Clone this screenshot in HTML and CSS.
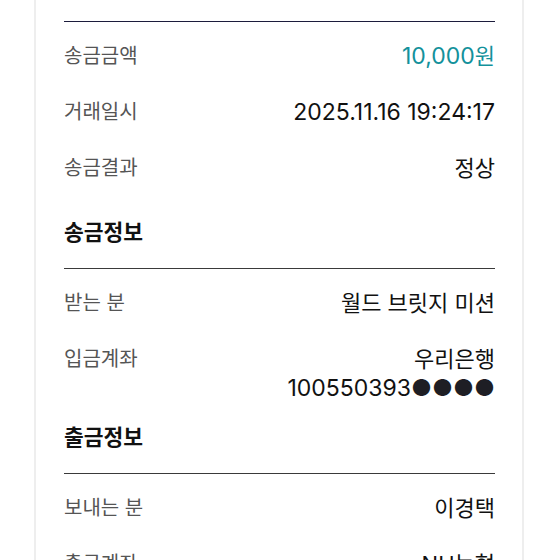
FILE: index.html
```html
<!DOCTYPE html>
<html lang="ko">
<head>
    <meta charset="UTF-8">
    <meta name="viewport" content="width=device-width, initial-scale=1.0"/>
    <title>이체 상세</title>
    <link rel="stylesheet" href="styles.css">
</head>
<body>
    <!--transfer receipt-->
    <div class="card">
        <div class="line line-top"></div>

        <div class="row">
            <span class="label">송금금액</span>
            <span class="value num amount">10,000<span class="ko">원</span></span>
        </div>
        <div class="row">
            <span class="label">거래일시</span>
            <span class="value num">2025.11.16 19:24:17</span>
        </div>
        <div class="row">
            <span class="label">송금결과</span>
            <span class="value">정상</span>
        </div>

        <h3 class="section">송금정보</h3>
        <div class="line"></div>

        <div class="row">
            <span class="label">받는 분</span>
            <span class="value">월드 브릿지 미션</span>
        </div>
        <div class="row row-last">
            <span class="label">입금계좌</span>
            <span class="value">우리은행<br><span class="num">100550393</span><span class="mask">●●●●</span></span>
        </div>

        <h3 class="section">출금정보</h3>
        <div class="line"></div>

        <div class="row">
            <span class="label">보내는 분</span>
            <span class="value">이경택</span>
        </div>
        <div class="row">
            <span class="label">출금계좌</span>
            <span class="value">NH농협</span>
        </div>
    </div>
</body>
</html>
```

FILE: styles.css
```css
* {
  font-family: "Inter", "Noto Sans CJK KR", sans-serif;
  box-sizing: border-box;
}
body {
  margin: 0;
  background: #fff;
}
.card {
  width: 490px;
  margin-left: 34px;
  padding: 21px 27px 0 28px;
  border-left: 2px solid #eeeeee;
  border-right: 2px solid #eeeeee;
  min-height: 600px;
}
.line {
  height: 1px;
  background: #3a3a3a;
}
.line-top {
  background: #1c1c3c;
}
.row {
  display: flex;
  justify-content: space-between;
  align-items: flex-start;
  padding: 20px 0 7px;
}
.row-last {
  padding-bottom: 0;
  margin-bottom: -8px;
}
.label {
  font-size: 20px;
  line-height: 28px;
  color: #555;
}
.value {
  font-size: 22px;
  line-height: 29px;
  color: #111;
  text-align: right;
}
.num {
  font-size: 23px;
}
.num .ko {
  font-size: 22px;
}
.amount {
  color: #13919b;
}
.mask {
  font-size: 23px;
  color: #1e1e24;
}
.section {
  margin: 0;
  padding: 27px 0 21px;
  font-size: 21.5px;
  line-height: 30px;
  font-weight: 700;
  color: #111;
}
```
